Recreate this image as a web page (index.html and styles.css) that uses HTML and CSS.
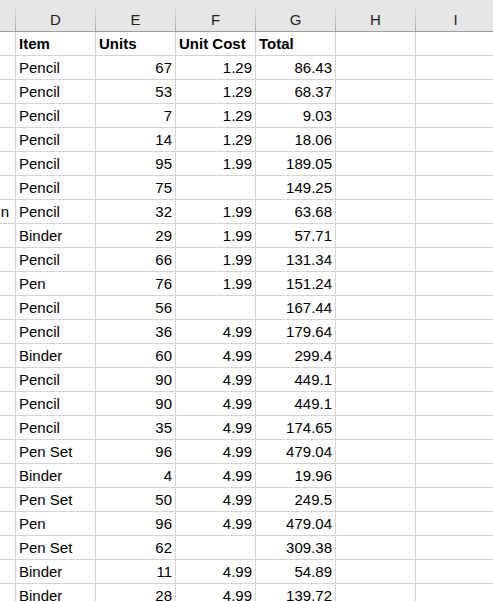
FILE: index.html
```html
<!DOCTYPE html>
<html>
<head>
<meta charset="utf-8">
<link rel="stylesheet" href="styles.css">
</head>
<body>
<div class="sheet">
  <div class="top-strip"></div>
  <div class="col-headers">
    <div class="corner"></div>
    <div class="colh">D</div>
    <div class="colh">E</div>
    <div class="colh">F</div>
    <div class="colh">G</div>
    <div class="colh">H</div>
    <div class="colh">I</div>
  </div>
  <div class="grid" id="grid">
    <div class="stub"></div><div class="cell bold">Item</div><div class="cell bold">Units</div><div class="cell bold">Unit Cost</div><div class="cell bold">Total</div><div class="cell"></div><div class="cell"></div>
    <div class="stub"></div><div class="cell">Pencil</div><div class="cell num">67</div><div class="cell num">1.29</div><div class="cell num">86.43</div><div class="cell"></div><div class="cell"></div>
    <div class="stub"></div><div class="cell">Pencil</div><div class="cell num">53</div><div class="cell num">1.29</div><div class="cell num">68.37</div><div class="cell"></div><div class="cell"></div>
    <div class="stub"></div><div class="cell">Pencil</div><div class="cell num">7</div><div class="cell num">1.29</div><div class="cell num">9.03</div><div class="cell"></div><div class="cell"></div>
    <div class="stub"></div><div class="cell">Pencil</div><div class="cell num">14</div><div class="cell num">1.29</div><div class="cell num">18.06</div><div class="cell"></div><div class="cell"></div>
    <div class="stub"></div><div class="cell">Pencil</div><div class="cell num">95</div><div class="cell num">1.99</div><div class="cell num">189.05</div><div class="cell"></div><div class="cell"></div>
    <div class="stub"></div><div class="cell">Pencil</div><div class="cell num">75</div><div class="cell num"></div><div class="cell num">149.25</div><div class="cell"></div><div class="cell"></div>
    <div class="stub overflow">n</div><div class="cell">Pencil</div><div class="cell num">32</div><div class="cell num">1.99</div><div class="cell num">63.68</div><div class="cell"></div><div class="cell"></div>
    <div class="stub"></div><div class="cell">Binder</div><div class="cell num">29</div><div class="cell num">1.99</div><div class="cell num">57.71</div><div class="cell"></div><div class="cell"></div>
    <div class="stub"></div><div class="cell">Pencil</div><div class="cell num">66</div><div class="cell num">1.99</div><div class="cell num">131.34</div><div class="cell"></div><div class="cell"></div>
    <div class="stub"></div><div class="cell">Pen</div><div class="cell num">76</div><div class="cell num">1.99</div><div class="cell num">151.24</div><div class="cell"></div><div class="cell"></div>
    <div class="stub"></div><div class="cell">Pencil</div><div class="cell num">56</div><div class="cell num"></div><div class="cell num">167.44</div><div class="cell"></div><div class="cell"></div>
    <div class="stub"></div><div class="cell">Pencil</div><div class="cell num">36</div><div class="cell num">4.99</div><div class="cell num">179.64</div><div class="cell"></div><div class="cell"></div>
    <div class="stub"></div><div class="cell">Binder</div><div class="cell num">60</div><div class="cell num">4.99</div><div class="cell num">299.4</div><div class="cell"></div><div class="cell"></div>
    <div class="stub"></div><div class="cell">Pencil</div><div class="cell num">90</div><div class="cell num">4.99</div><div class="cell num">449.1</div><div class="cell"></div><div class="cell"></div>
    <div class="stub"></div><div class="cell">Pencil</div><div class="cell num">90</div><div class="cell num">4.99</div><div class="cell num">449.1</div><div class="cell"></div><div class="cell"></div>
    <div class="stub"></div><div class="cell">Pencil</div><div class="cell num">35</div><div class="cell num">4.99</div><div class="cell num">174.65</div><div class="cell"></div><div class="cell"></div>
    <div class="stub"></div><div class="cell">Pen Set</div><div class="cell num">96</div><div class="cell num">4.99</div><div class="cell num">479.04</div><div class="cell"></div><div class="cell"></div>
    <div class="stub"></div><div class="cell">Binder</div><div class="cell num">4</div><div class="cell num">4.99</div><div class="cell num">19.96</div><div class="cell"></div><div class="cell"></div>
    <div class="stub"></div><div class="cell">Pen Set</div><div class="cell num">50</div><div class="cell num">4.99</div><div class="cell num">249.5</div><div class="cell"></div><div class="cell"></div>
    <div class="stub"></div><div class="cell">Pen</div><div class="cell num">96</div><div class="cell num">4.99</div><div class="cell num">479.04</div><div class="cell"></div><div class="cell"></div>
    <div class="stub"></div><div class="cell">Pen Set</div><div class="cell num">62</div><div class="cell num"></div><div class="cell num">309.38</div><div class="cell"></div><div class="cell"></div>
    <div class="stub"></div><div class="cell">Binder</div><div class="cell num">11</div><div class="cell num">4.99</div><div class="cell num">54.89</div><div class="cell"></div><div class="cell"></div>
    <div class="stub"></div><div class="cell">Binder</div><div class="cell num">28</div><div class="cell num">4.99</div><div class="cell num">139.72</div><div class="cell"></div><div class="cell"></div>
  </div>
</div>
</body>
</html>
```

FILE: styles.css
```css
html, body {
  margin: 0;
  padding: 0;
  background: #ffffff;
  overflow: hidden;
}

.sheet {
  width: 493px;
  height: 601px;
  overflow: hidden;
  font-family: "Liberation Sans", Arial, sans-serif;
  font-size: 15px;
  color: #000000;
}

.top-strip {
  height: 8px;
  background: #e6e6e6;
}

.col-headers {
  display: grid;
  grid-template-columns: 16px repeat(6, 80px);
  background: #e6e6e6;
  border-bottom: 1px solid #9e9e9e;
  height: 23px;
}

.corner,
.colh {
  box-sizing: border-box;
  height: 23px;
  border-right: 1px solid #c0c0c0;
  border-image: linear-gradient(to bottom, #dcdcdc, #a8a8a8) 1;
  border-style: solid;
  border-width: 0 1px 0 0;
}

.colh {
  text-align: center;
  line-height: 23px;
  color: #222222;
}

.grid {
  display: grid;
  grid-template-columns: 16px repeat(6, 80px);
  grid-auto-rows: 24px;
}

.stub,
.cell {
  box-sizing: border-box;
  border-right: 1px solid #d4d4d4;
  border-bottom: 1px solid #d4d4d4;
  line-height: 23px;
  white-space: nowrap;
  overflow: hidden;
}

.cell {
  padding: 0 3px 0 3px;
}

.num {
  text-align: right;
  padding-right: 3px;
}

.bold {
  font-weight: bold;
}

.overflow {
  text-align: right;
  padding-right: 6px;
  overflow: visible;
}
```
